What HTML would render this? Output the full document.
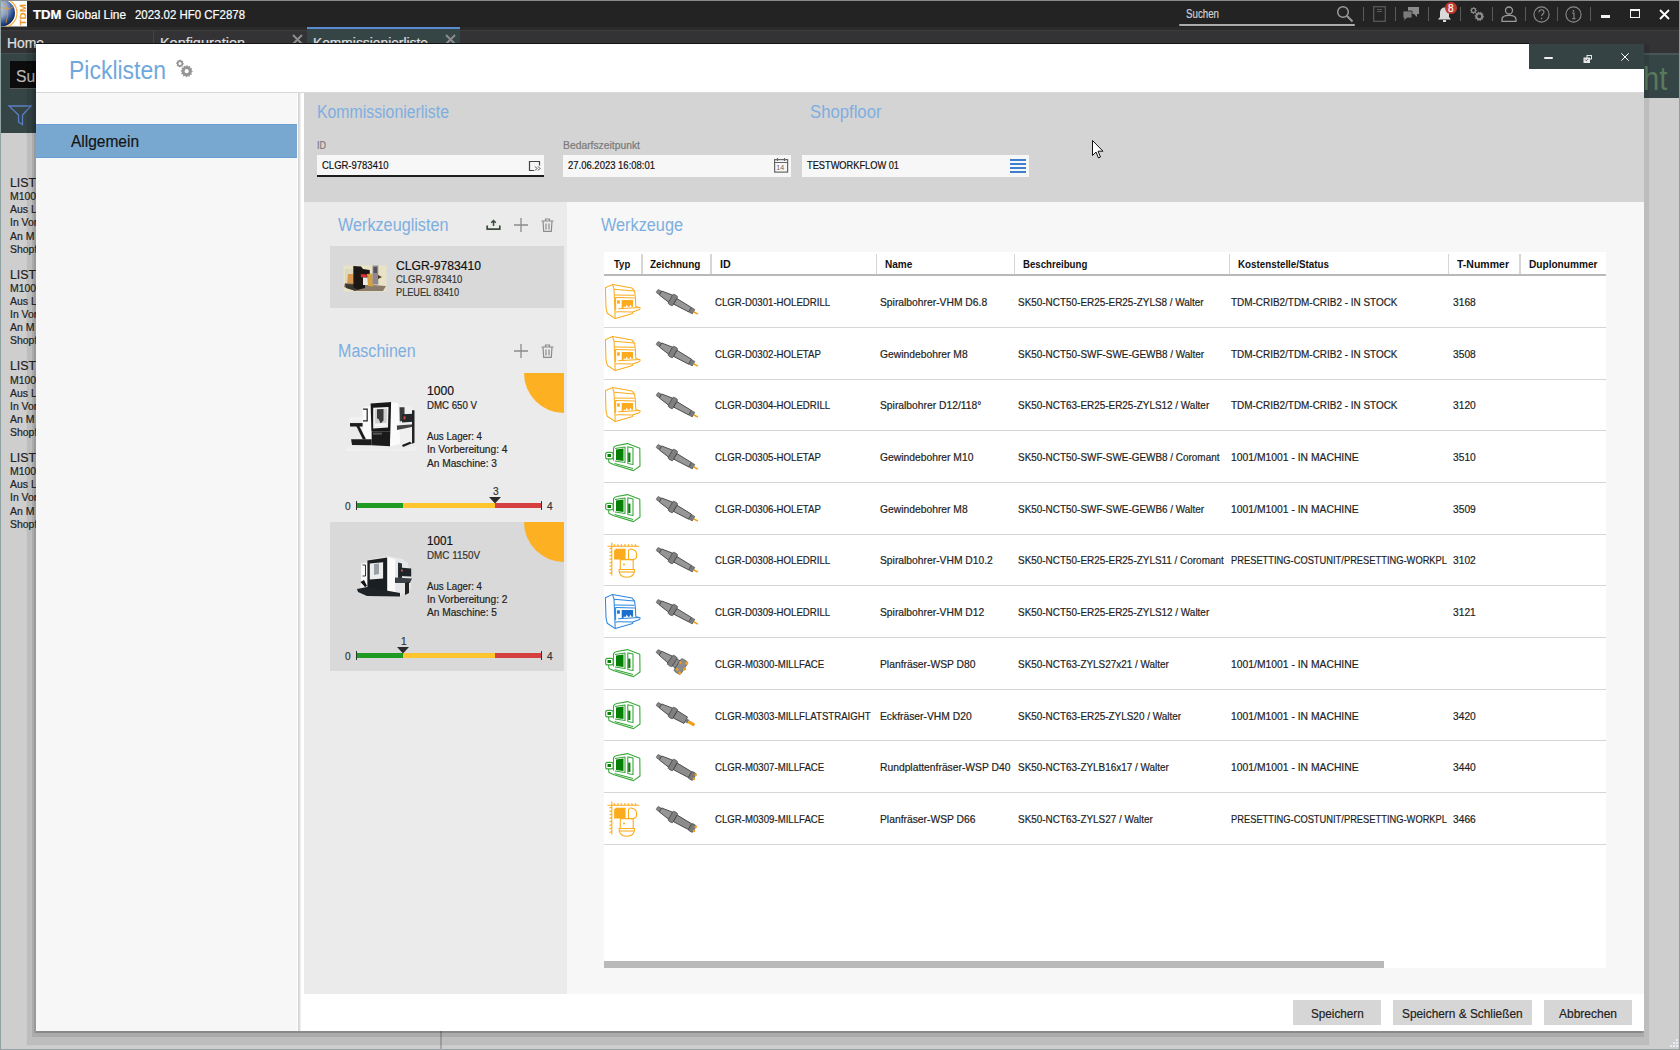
<!DOCTYPE html>
<html><head><meta charset="utf-8">
<style>
*{box-sizing:border-box;margin:0;padding:0}
html,body{width:1680px;height:1050px;overflow:hidden;background:#cecece;font-family:"Liberation Sans",sans-serif;position:relative}
.a{position:absolute}
.t{position:absolute;white-space:nowrap;line-height:1;transform-origin:0 0;-webkit-text-stroke:0.2px currentColor}
svg{position:absolute;overflow:visible}
</style></head><body>

<div class="a" style="left:0px;top:0px;width:1680px;height:1050px;background:#cecece;"></div>
<div class="a" style="left:0px;top:0px;width:1680px;height:27px;background:#232323;"></div>
<div class="a" style="left:0px;top:0px;width:1680px;height:1px;background:#8a8a8a;"></div>
<svg style="left:1px;top:1px" width="26" height="26" viewBox="0 0 26 26"><defs><radialGradient id="gl" cx="0.35" cy="0.3" r="0.8"><stop offset="0" stop-color="#c8d0e0"/><stop offset="0.45" stop-color="#8fa3c8"/><stop offset="0.75" stop-color="#2a4c8c"/><stop offset="1" stop-color="#0a1a40"/></radialGradient><clipPath id="lc"><rect width="26" height="25.5"/></clipPath></defs><rect width="26" height="25.5" fill="#fdfdfd"/><g clip-path="url(#lc)"><circle cx="1.5" cy="12" r="14.5" fill="none" stroke="#f5b040" stroke-width="1.2"/><circle cx="0.5" cy="12" r="13.5" fill="url(#gl)"/><path d="M2 1Q9 8 5 22M-1 6Q8 10 13 5" fill="none" stroke="#e8a030" stroke-width="0.9" opacity="0.8"/></g><text x="0" y="0" transform="translate(24.5 24.5) rotate(-90)" font-family="Liberation Sans" font-weight="bold" font-size="9.5" fill="#ec9522" textLength="21.5" lengthAdjust="spacingAndGlyphs">TDM</text></svg>
<div class="t" style="left:33px;top:9.44px;font-size:12px;color:#fff;font-weight:700;transform:scaleX(1.0962);">TDM</div>
<div class="t" style="left:66px;top:9.44px;font-size:12px;color:#fff;font-weight:400;transform:scaleX(0.9882);">Global Line</div>
<div class="t" style="left:135.3px;top:9.44px;font-size:12px;color:#fff;font-weight:400;transform:scaleX(0.9532);">2023.02 HF0 CF2878</div>
<div class="t" style="left:1186px;top:7.84px;font-size:12px;color:#d0d0d0;font-weight:400;transform:scaleX(0.8107);">Suchen</div>
<div class="a" style="left:1179px;top:24px;width:176px;height:2px;background:#acacac;border-radius:1px"></div>
<svg style="left:1336px;top:5px" width="18" height="18" viewBox="0 0 18 18"><circle cx="7" cy="7" r="5.3" fill="none" stroke="#9a9a9a" stroke-width="1.5"/><line x1="11" y1="11" x2="16.5" y2="16.5" stroke="#9a9a9a" stroke-width="2"/></svg>
<div class="a" style="left:1363px;top:7px;width:1px;height:14px;background:#5a5a5a;"></div>
<div class="a" style="left:1395px;top:7px;width:1px;height:14px;background:#5a5a5a;"></div>
<div class="a" style="left:1428px;top:7px;width:1px;height:14px;background:#5a5a5a;"></div>
<div class="a" style="left:1460px;top:7px;width:1px;height:14px;background:#5a5a5a;"></div>
<div class="a" style="left:1492px;top:7px;width:1px;height:14px;background:#5a5a5a;"></div>
<div class="a" style="left:1525px;top:7px;width:1px;height:14px;background:#5a5a5a;"></div>
<div class="a" style="left:1557px;top:7px;width:1px;height:14px;background:#5a5a5a;"></div>
<div class="a" style="left:1590px;top:7px;width:1px;height:14px;background:#5a5a5a;"></div>
<svg style="left:1373px;top:6px" width="13" height="16" viewBox="0 0 13 16"><rect x="0.7" y="0.7" width="11.6" height="14.6" fill="none" stroke="#5c5c5c" stroke-width="1.2"/><line x1="4" y1="3.5" x2="9" y2="3.5" stroke="#5c5c5c"/><line x1="4" y1="5.5" x2="9" y2="5.5" stroke="#5c5c5c"/></svg>
<svg style="left:1403px;top:7px" width="16" height="14" viewBox="0 0 16 14"><path d="M5 0h11v7h-2v3l-3-3H5z" fill="#8c8c8c"/><path d="M0 4h9v7H4l-3 3v-3H0z" fill="#7a7a7a" stroke="#232323" stroke-width="0.8"/></svg>
<svg style="left:1437px;top:6px" width="15" height="17" viewBox="0 0 15 17"><path d="M7.5 1.5c-3 0-4.5 2.5-4.5 5.5v4l-2 2.5h13l-2-2.5v-4c0-3-1.5-5.5-4.5-5.5z" fill="#d9d9d9"/><rect x="6" y="14" width="3" height="2" fill="#d9d9d9"/></svg>
<div class="a" style="left:1445px;top:2px;width:12px;height:12px;border-radius:50%;background:#c0392b"></div>
<div class="t" style="left:1448px;top:3.54px;font-size:10px;color:#fff;font-weight:400;">8</div>
<svg style="left:1469px;top:6px" width="16" height="16" viewBox="0 0 16 16"><path fill-rule="evenodd" fill="#8a8a8a" d="M7.90 4.50L7.83 5.16L6.99 5.53L6.74 6.00L6.90 6.90L6.39 7.33L5.53 6.99L5.03 7.15L4.50 7.90L3.84 7.83L3.47 6.99L3.00 6.74L2.10 6.90L1.67 6.39L2.01 5.53L1.85 5.03L1.10 4.50L1.17 3.84L2.01 3.47L2.26 3.00L2.10 2.10L2.61 1.67L3.47 2.01L3.97 1.85L4.50 1.10L5.16 1.17L5.53 2.01L6.00 2.26L6.90 2.10L7.33 2.61L6.99 3.47L7.15 3.97ZM5.90 4.50A1.4 1.4 0 1 0 3.10 4.50A1.4 1.4 0 1 0 5.90 4.50ZM15.00 10.30L14.94 11.04L14.01 11.51L13.77 12.07L14.10 13.06L13.62 13.62L12.59 13.46L12.07 13.77L11.75 14.77L11.04 14.94L10.30 14.20L9.69 14.15L8.85 14.77L8.17 14.49L8.01 13.46L7.54 13.06L6.50 13.06L6.11 12.43L6.59 11.51L6.45 10.91L5.60 10.30L5.66 9.56L6.59 9.09L6.83 8.53L6.50 7.54L6.98 6.98L8.01 7.14L8.53 6.83L8.85 5.83L9.56 5.66L10.30 6.40L10.91 6.45L11.75 5.83L12.43 6.11L12.59 7.14L13.06 7.54L14.10 7.54L14.49 8.17L14.01 9.09L14.15 9.69ZM12.20 10.30A1.9 1.9 0 1 0 8.40 10.30A1.9 1.9 0 1 0 12.20 10.30Z"/></svg>
<svg style="left:1501px;top:6px" width="16" height="16" viewBox="0 0 16 16"><circle cx="8" cy="4.5" r="3.5" fill="none" stroke="#9a9a9a" stroke-width="1.3"/><path d="M1 15.3v-2c0-2.5 2.5-4 7-4s7 1.5 7 4v2z" fill="none" stroke="#9a9a9a" stroke-width="1.3"/></svg>
<svg style="left:1533px;top:6px" width="17" height="17" viewBox="0 0 17 17"><circle cx="8.5" cy="8.5" r="7.6" fill="none" stroke="#8a8a8a" stroke-width="1.1"/><path d="M6 6.3c0-1.5 1.2-2.5 2.5-2.5s2.5 1 2.5 2.3c0 1.8-2.4 2-2.4 4" fill="none" stroke="#8a8a8a" stroke-width="1.1"/><circle cx="8.6" cy="12.6" r="0.8" fill="#8a8a8a"/></svg>
<svg style="left:1565px;top:6px" width="17" height="17" viewBox="0 0 17 17"><circle cx="8.5" cy="8.5" r="7.6" fill="none" stroke="#8a8a8a" stroke-width="1.1"/><circle cx="8.5" cy="4.8" r="0.9" fill="#8a8a8a"/><path d="M7 7h2v5.5M7 12.8h3.5" fill="none" stroke="#8a8a8a" stroke-width="1.1"/></svg>
<div class="a" style="left:1601px;top:15px;width:9px;height:3px;background:#f4f4f4;"></div>
<div class="a" style="left:1630px;top:9px;width:10px;height:9px;border:1.2px solid #f4f4f4;border-top-width:2.6px"></div>
<svg style="left:1659px;top:9px" width="11" height="11" viewBox="0 0 11 11"><path d="M1 1L10 10M10 1L1 10" stroke="#fff" stroke-width="1.8"/></svg>
<div class="a" style="left:0px;top:27px;width:1680px;height:27px;background:#333336;"></div>
<div class="a" style="left:0px;top:27px;width:1680px;height:3px;background:#2a2a2a;"></div>
<div class="a" style="left:0px;top:30px;width:1680px;height:1px;background:#3d3d3f;"></div>
<div class="a" style="left:153px;top:31px;width:1px;height:14px;background:#444;"></div>
<div class="a" style="left:307px;top:27px;width:153px;height:20px;background:#354445;"></div>
<div class="a" style="left:307px;top:27px;width:153px;height:2px;background:#5b8bd0;"></div>
<div class="t" style="left:7px;top:35.30px;font-size:15px;color:#e0e0e0;font-weight:400;transform:scaleX(0.9246);">Home</div>
<div class="t" style="left:160px;top:35.30px;font-size:15px;color:#e0e0e0;font-weight:400;transform:scaleX(0.9615);">Konfiguration</div>
<div class="t" style="left:313px;top:35.30px;font-size:15px;color:#e0e0e0;font-weight:400;transform:scaleX(0.9197);">Kommissionierliste</div>
<svg style="left:292px;top:34px" width="11" height="10" viewBox="0 0 11 10"><path d="M1 1L10 10M10 1L1 10" stroke="#8c8c8c" stroke-width="2"/></svg>
<svg style="left:445px;top:34px" width="11" height="10" viewBox="0 0 11 10"><path d="M1 1L10 10M10 1L1 10" stroke="#8c8c8c" stroke-width="2"/></svg>
<div class="a" style="left:1px;top:53px;width:35px;height:80px;background:#354445;"></div>
<div class="a" style="left:1px;top:53px;width:35px;height:1px;background:#454f50;"></div>
<div class="a" style="left:10px;top:61px;width:26px;height:28px;background:#0c0c0c;"></div>
<div class="a" style="left:10px;top:88px;width:26px;height:1px;background:#5a5a5a;"></div>
<div class="t" style="left:16px;top:67.61px;font-size:17px;color:#b9b9b9;font-weight:400;transform:scaleX(0.9200);">Su</div>
<svg style="left:8px;top:105px" width="24" height="21" viewBox="0 0 24 21"><path d="M1 1h22l-8.5 9v9.5l-4-2.5v-7z" fill="none" stroke="#5b7fc4" stroke-width="1.3"/></svg>
<div class="a" style="left:0px;top:0px;width:1px;height:1050px;background:#8fa3a3;"></div>
<div class="a" style="left:0px;top:1049px;width:1680px;height:1px;background:#8fa3a3;"></div>
<div class="a" style="left:1679px;top:0px;width:1px;height:1050px;background:#9a9a9a;"></div>
<div class="t" style="left:10px;top:176.00px;font-size:13px;color:#222;font-weight:400;transform:scaleX(0.9500);">LISTI</div>
<div class="t" style="left:10px;top:191.39px;font-size:11px;color:#222;font-weight:400;transform:scaleX(0.9500);">M100</div>
<div class="t" style="left:10px;top:204.29px;font-size:11px;color:#222;font-weight:400;transform:scaleX(0.9500);">Aus L</div>
<div class="t" style="left:10px;top:217.39px;font-size:11px;color:#222;font-weight:400;transform:scaleX(0.9500);">In Vor</div>
<div class="t" style="left:10px;top:230.69px;font-size:11px;color:#222;font-weight:400;transform:scaleX(0.9500);">An M</div>
<div class="t" style="left:10px;top:243.59px;font-size:11px;color:#222;font-weight:400;transform:scaleX(0.9500);">Shopf</div>
<div class="t" style="left:10px;top:267.70px;font-size:13px;color:#222;font-weight:400;transform:scaleX(0.9500);">LISTI</div>
<div class="t" style="left:10px;top:283.09px;font-size:11px;color:#222;font-weight:400;transform:scaleX(0.9500);">M100</div>
<div class="t" style="left:10px;top:295.99px;font-size:11px;color:#222;font-weight:400;transform:scaleX(0.9500);">Aus L</div>
<div class="t" style="left:10px;top:309.09px;font-size:11px;color:#222;font-weight:400;transform:scaleX(0.9500);">In Vor</div>
<div class="t" style="left:10px;top:322.39px;font-size:11px;color:#222;font-weight:400;transform:scaleX(0.9500);">An M</div>
<div class="t" style="left:10px;top:335.29px;font-size:11px;color:#222;font-weight:400;transform:scaleX(0.9500);">Shopf</div>
<div class="t" style="left:10px;top:359.40px;font-size:13px;color:#222;font-weight:400;transform:scaleX(0.9500);">LISTI</div>
<div class="t" style="left:10px;top:374.79px;font-size:11px;color:#222;font-weight:400;transform:scaleX(0.9500);">M100</div>
<div class="t" style="left:10px;top:387.69px;font-size:11px;color:#222;font-weight:400;transform:scaleX(0.9500);">Aus L</div>
<div class="t" style="left:10px;top:400.79px;font-size:11px;color:#222;font-weight:400;transform:scaleX(0.9500);">In Vor</div>
<div class="t" style="left:10px;top:414.09px;font-size:11px;color:#222;font-weight:400;transform:scaleX(0.9500);">An M</div>
<div class="t" style="left:10px;top:426.99px;font-size:11px;color:#222;font-weight:400;transform:scaleX(0.9500);">Shopf</div>
<div class="t" style="left:10px;top:451.10px;font-size:13px;color:#222;font-weight:400;transform:scaleX(0.9500);">LISTI</div>
<div class="t" style="left:10px;top:466.49px;font-size:11px;color:#222;font-weight:400;transform:scaleX(0.9500);">M100</div>
<div class="t" style="left:10px;top:479.39px;font-size:11px;color:#222;font-weight:400;transform:scaleX(0.9500);">Aus L</div>
<div class="t" style="left:10px;top:492.49px;font-size:11px;color:#222;font-weight:400;transform:scaleX(0.9500);">In Vor</div>
<div class="t" style="left:10px;top:505.79px;font-size:11px;color:#222;font-weight:400;transform:scaleX(0.9500);">An M</div>
<div class="t" style="left:10px;top:518.69px;font-size:11px;color:#222;font-weight:400;transform:scaleX(0.9500);">Shopf</div>
<div class="a" style="left:1644px;top:53px;width:35px;height:45px;background:#354445;"></div>
<div class="a" style="left:1644px;top:53px;width:35px;height:2px;background:#4a5556;"></div>
<div class="t" style="left:1643px;top:61.22px;font-size:34px;color:#587a5c;font-weight:400;transform:scaleX(0.8600);-webkit-text-stroke:0">ht</div>
<div class="a" style="left:440px;top:1031px;width:2px;height:19px;background:#a8a8a8;"></div>
<div class="a" style="left:36px;top:43px;width:1493px;height:1px;background:#141414;"></div>
<div class="a" style="left:36px;top:44px;width:1608px;height:987px;background:#fff;box-shadow:0 2px 0 0 rgba(0,0,0,.11),-2px 2px 0 0 rgba(0,0,0,.094),-2px 4px 0 2px rgba(0,0,0,.095),-2px 7px 1px 7px rgba(0,0,0,.083)"></div>
<div class="a" style="left:36px;top:92px;width:1608px;height:1px;background:#d9d9d9;"></div>
<div class="t" style="left:68.5px;top:56.99px;font-size:26px;color:#6fa8dc;font-weight:400;transform:scaleX(0.8832);-webkit-text-stroke:0">Picklisten</div>
<svg style="left:170px;top:55px" width="30" height="27" viewBox="0 0 30 27"><path fill-rule="evenodd" fill="#959595" d="M13.90 8.50L13.83 9.26L12.96 9.72L12.66 10.28L12.76 11.26L12.17 11.74L11.22 11.46L10.62 11.64L10.00 12.40L9.24 12.33L8.78 11.46L8.22 11.16L7.24 11.26L6.76 10.67L7.04 9.72L6.86 9.12L6.10 8.50L6.17 7.74L7.04 7.28L7.34 6.72L7.24 5.74L7.83 5.26L8.78 5.54L9.38 5.36L10.00 4.60L10.76 4.67L11.22 5.54L11.78 5.84L12.76 5.74L13.24 6.33L12.96 7.28L13.14 7.88ZM11.50 8.50A1.5 1.5 0 1 0 8.50 8.50A1.5 1.5 0 1 0 11.50 8.50ZM22.70 16.20L22.65 16.98L21.53 17.49L21.32 18.11L21.90 19.20L21.46 19.85L20.24 19.74L19.74 20.17L19.70 21.40L19.00 21.74L17.99 21.03L17.35 21.16L16.70 22.20L15.92 22.15L15.41 21.03L14.79 20.82L13.70 21.40L13.05 20.96L13.16 19.74L12.73 19.24L11.50 19.20L11.16 18.50L11.87 17.49L11.74 16.85L10.70 16.20L10.75 15.42L11.87 14.91L12.08 14.29L11.50 13.20L11.94 12.55L13.16 12.66L13.66 12.23L13.70 11.00L14.40 10.66L15.41 11.37L16.05 11.24L16.70 10.20L17.48 10.25L17.99 11.37L18.61 11.58L19.70 11.00L20.35 11.44L20.24 12.66L20.67 13.16L21.90 13.20L22.24 13.90L21.53 14.91L21.66 15.55ZM18.80 16.20A2.1 2.1 0 1 0 14.60 16.20A2.1 2.1 0 1 0 18.80 16.20Z"/></svg>
<div class="a" style="left:1529px;top:44px;width:115px;height:25px;background:#354345;"></div>
<div class="a" style="left:1544px;top:57px;width:9px;height:2px;background:#f0f0f0;border-radius:1px"></div>
<svg style="left:1583px;top:55px" width="9" height="8" viewBox="0 0 9 8"><rect x="0.5" y="2.5" width="6.5" height="5.5" fill="#e6e6e6"/><rect x="4" y="0.5" width="4.5" height="3.5" fill="none" stroke="#e6e6e6" stroke-width="1"/><path d="M2 4.5l1.3 1.3 1.8-1.8" stroke="#354345" stroke-width="0.8" fill="none"/></svg>
<svg style="left:1621px;top:52.5px" width="8" height="8" viewBox="0 0 8 8"><path d="M.3 .3L7.7 7.7M7.7 .3L.3 7.7" stroke="#fff" stroke-width="1"/></svg>
<div class="a" style="left:36px;top:93px;width:262px;height:938px;background:#f7f7f7;"></div>
<div class="a" style="left:36px;top:124px;width:262px;height:34px;background:#78a8cf;border-top:1px solid #6a9dd0;border-bottom:1px solid #6a9dd0;border-right:1px solid #6a9dd0"></div>
<div class="t" style="left:71px;top:134.46px;font-size:16px;color:#141414;font-weight:400;transform:scaleX(0.9678);">Allgemein</div>
<div class="a" style="left:297px;top:93px;width:8px;height:938px;background:#fff;"></div>
<div class="a" style="left:298px;top:93px;width:1px;height:938px;background:#d3d3d3;"></div>
<div class="a" style="left:299px;top:93px;width:1px;height:938px;background:#dedede;"></div>
<div class="a" style="left:300px;top:93px;width:1px;height:938px;background:#efefef;"></div>
<div class="a" style="left:304px;top:93px;width:1340px;height:109px;background:#d4d4d4;"></div>
<div class="t" style="left:317px;top:103.36px;font-size:18px;color:#7eaee0;font-weight:400;transform:scaleX(0.8797);-webkit-text-stroke:0">Kommissionierliste</div>
<div class="t" style="left:809.5px;top:103.36px;font-size:18px;color:#7eaee0;font-weight:400;transform:scaleX(0.9278);-webkit-text-stroke:0">Shopfloor</div>
<div class="t" style="left:317px;top:141.23px;font-size:10px;color:#7a7a7a;font-weight:400;transform:scaleX(0.9000);">ID</div>
<div class="t" style="left:563.3px;top:141.23px;font-size:10px;color:#7a7a7a;font-weight:400;transform:scaleX(1.0336);">Bedarfszeitpunkt</div>
<div class="a" style="left:317px;top:155px;width:227px;height:22px;background:#f7f7f7;border-bottom:2px solid #1e1e1e"></div>
<div class="t" style="left:322px;top:159.99px;font-size:11px;color:#111;font-weight:400;transform:scaleX(0.8629);">CLGR-9783410</div>
<svg style="left:528px;top:160px" width="14" height="12" viewBox="0 0 14 12"><path d="M6 10.5H1.5v-9h10v4" fill="none" stroke="#444" stroke-width="1.2"/><path d="M7 6.5l2 2-2 2M10 6.5l2 2-2 2" fill="none" stroke="#444" stroke-width="1"/></svg>
<div class="a" style="left:563px;top:155px;width:228px;height:22px;background:#f7f7f7;"></div>
<div class="t" style="left:568px;top:159.99px;font-size:11px;color:#111;font-weight:400;transform:scaleX(0.8619);">27.06.2023 16:08:01</div>
<svg style="left:773px;top:157px" width="16" height="16" viewBox="0 0 16 16"><rect x="1.6" y="2.6" width="13" height="12.5" fill="none" stroke="#666" stroke-width="1.2"/><line x1="1.6" y1="5.5" x2="14.6" y2="5.5" stroke="#666" stroke-width="1"/><line x1="4.5" y1="1" x2="4.5" y2="4" stroke="#666" stroke-width="1.2"/><line x1="11.5" y1="1" x2="11.5" y2="4" stroke="#666" stroke-width="1.2"/><text x="3.3" y="13.4" font-size="7" font-family="Liberation Sans" fill="#666">14</text></svg>
<div class="a" style="left:802px;top:155px;width:227px;height:22px;background:#f7f7f7;"></div>
<div class="t" style="left:807px;top:159.99px;font-size:11px;color:#111;font-weight:400;transform:scaleX(0.8409);">TESTWORKFLOW 01</div>
<div class="a" style="left:1010px;top:159px;width:16px;height:1.5px;background:#3f7fcf;"></div>
<div class="a" style="left:1010px;top:163px;width:16px;height:1.5px;background:#3f7fcf;"></div>
<div class="a" style="left:1010px;top:167px;width:16px;height:1.5px;background:#3f7fcf;"></div>
<div class="a" style="left:1010px;top:171px;width:16px;height:1.5px;background:#3f7fcf;"></div>
<svg style="left:1092px;top:140px" width="12" height="19" viewBox="0 0 12 19"><path d="M.5 .5v15l3.5-3.5 2.5 6 2-1-2.5-5.8h5z" fill="#fff" stroke="#111" stroke-width="1"/></svg>
<div class="a" style="left:304px;top:202px;width:263px;height:792px;background:#ebebeb;"></div>
<div class="t" style="left:338px;top:215.76px;font-size:18px;color:#7eaee0;font-weight:400;transform:scaleX(0.9003);-webkit-text-stroke:0">Werkzeuglisten</div>
<svg style="left:486px;top:218px" width="15" height="13" viewBox="0 0 15 13"><path d="M1.2 7.5v3.6h12.6v-3.6" fill="none" stroke="#3b4a3b" stroke-width="1.7"/><path d="M7.5 2.5v5.5M5.2 4.8L7.5 2.5l2.3 2.3" fill="none" stroke="#3b4a3b" stroke-width="1.5"/></svg>
<svg style="left:514px;top:218px" width="14" height="14" viewBox="0 0 14 14"><path d="M7 0v14M0 7h14" stroke="#8c8c8c" stroke-width="1.3"/></svg>
<svg style="left:541px;top:218px" width="13" height="14" viewBox="0 0 13 14"><path d="M0.5 3h12M4.5 3V1h4v2M2 3l.7 10.3h7.6L11 3M5 5.5v6M8 5.5v6" fill="none" stroke="#8c8c8c" stroke-width="1.2"/></svg>
<div class="a" style="left:330px;top:246px;width:234px;height:62px;background:#d9d9d9;"></div>
<svg style="left:343px;top:264.5px" width="44" height="27" viewBox="0 0 44 27"><rect x="0.5" y="0.5" width="43" height="26" rx="1" fill="#e9e3c6"/><rect x="2" y="4" width="8" height="14" fill="#ddd8c0"/><path d="M5 9L10.3 9L10.3 20L4 20z" fill="#d99850"/><path d="M2 18L43 21L40 26L12 26L1 22z" fill="#8a7a6a"/><path d="M2 19L12 19.5L13 26L3 23z" fill="#3a3630"/><path d="M10.3 1L18 1.5L20 4L26.7 5L27 15L22 17L22 23L14 25L10.3 22z" fill="#1a1714"/><path d="M17.8 9.1L24 9.5L23.5 12L18 12.5z" fill="#e03030"/><path d="M20 12.5L25 12.5L25 20L20 20z" fill="#ecebe6"/><path d="M24 9L29.5 8.6L30 21.6L25 21z" fill="#d4a040"/><path d="M29.5 0.5L35.3 0.5L35.3 19.5L29.5 19.5z" fill="#8f8790"/><path d="M30.5 2L34 2L34 8L30.5 8z" fill="#55505a"/><path d="M35 10L39 12L35 14z" fill="#4a3a2a"/></svg>
<div class="t" style="left:395.5px;top:258.50px;font-size:13px;color:#111;font-weight:400;transform:scaleX(0.9334);">CLGR-9783410</div>
<div class="t" style="left:396px;top:273.89px;font-size:11px;color:#333;font-weight:400;transform:scaleX(0.8603);">CLGR-9783410</div>
<div class="t" style="left:396px;top:286.99px;font-size:11px;color:#333;font-weight:400;transform:scaleX(0.8351);">PLEUEL 83410</div>
<div class="t" style="left:338px;top:341.96px;font-size:18px;color:#7eaee0;font-weight:400;transform:scaleX(0.8926);-webkit-text-stroke:0">Maschinen</div>
<svg style="left:514px;top:344px" width="14" height="14" viewBox="0 0 14 14"><path d="M7 0v14M0 7h14" stroke="#8c8c8c" stroke-width="1.3"/></svg>
<svg style="left:541px;top:344px" width="13" height="14" viewBox="0 0 13 14"><path d="M0.5 3h12M4.5 3V1h4v2M2 3l.7 10.3h7.6L11 3M5 5.5v6M8 5.5v6" fill="none" stroke="#8c8c8c" stroke-width="1.2"/></svg>
<div class="a" style="left:523.5px;top:372.5px;width:40px;height:40px;background:#fdb022;border-bottom-left-radius:40px"></div>
<svg style="left:346px;top:400px" width="70" height="51" viewBox="0 0 70 50" preserveAspectRatio="none"><path d="M0 47 Q35 52 70 45 L70 50 L0 50Z" fill="#f4f4f4" opacity="0.6"/><path d="M3 17l14-0.5v3.5l-14 0.5z" fill="#f2f2f2"/><path d="M16.6 7l9-1.5v35l-9-1.5z" fill="#fafafa"/><path d="M17 9h4.2v11.5H17" fill="none" stroke="#222" stroke-width="1.2"/><path d="M24.6 3.4L45.7 2L45.2 30.6L25.4 30.6z" fill="#181818"/><path d="M27.2 7.5L42.5 6.8L42 27L27.2 28z" fill="#f0f0f0"/><path d="M29 9L41 8.5L40.5 25.5L29 26z" fill="#cfcfcf"/><path d="M31 9L37.5 8.8L37.5 20L34.5 23L33 19L31 18z" fill="#3a3a3a"/><path d="M29 23L40.5 22.5L40.5 25.5L29 26z" fill="#f5f5f5"/><path d="M25.7 30.6L45.1 30.6L44 45.4L25.7 44.3z" fill="#1a1a1a"/><path d="M27 32L36 32L36 34L27 34z" fill="#555"/><path d="M45.1 2L52.6 3.1L54.3 43.1L44 45.4z" fill="#fbfbfb"/><path d="M52.6 5.4L66.9 5.4L66.9 42.6L54.3 45.4z" fill="#efefef"/><path d="M53.5 7L58.5 7L58.5 20L53.8 21z" fill="#3a3a3a"/><path d="M56 14L67.4 13.5L67.4 21.4L56 22z" fill="#22272b"/><path d="M57.5 16l2 0 0 3-2 0z" fill="#c44"/><path d="M50.9 25L68 23.7L68 26L51 29.4z" fill="#444"/><path d="M66 10L68.5 10L68.5 42L66 43z" fill="#222"/><path d="M56 44L64 41L66 42.5L57 46z" fill="#1a1a1a"/><path d="M4 22.6L16.6 22.6L16.6 26L4 26z" fill="#1c1c1c"/><path d="M10 25L13 25L20 38.6L16.8 38.6z" fill="#1c1c1c"/><path d="M5.1 38.6L25.7 38.6L25.7 44.3L6 44z" fill="#1c1c1c"/></svg>
<div class="t" style="left:427px;top:384.40px;font-size:13px;color:#111;font-weight:400;transform:scaleX(0.9335);">1000</div>
<div class="t" style="left:427px;top:399.99px;font-size:11px;color:#222;font-weight:400;transform:scaleX(0.8794);">DMC 650 V</div>
<div class="t" style="left:427px;top:431.39px;font-size:11px;color:#222;font-weight:400;transform:scaleX(0.8818);">Aus Lager: 4</div>
<div class="t" style="left:427px;top:444.29px;font-size:11px;color:#222;font-weight:400;transform:scaleX(0.9270);">In Vorbereitung: 4</div>
<div class="t" style="left:427px;top:457.59px;font-size:11px;color:#222;font-weight:400;transform:scaleX(0.9231);">An Maschine: 3</div>
<div class="t" style="left:345px;top:500.69px;font-size:11px;color:#333;font-weight:400;transform:scaleX(0.9200);">0</div>
<div class="t" style="left:547px;top:500.69px;font-size:11px;color:#333;font-weight:400;transform:scaleX(0.9200);">4</div>
<div class="a" style="left:356.5px;top:503.0px;width:46.5px;height:4.5px;background:#1f9a22;"></div>
<div class="a" style="left:403px;top:503.0px;width:92px;height:4.5px;background:#fec52e;"></div>
<div class="a" style="left:495px;top:503.0px;width:46.5px;height:4.5px;background:#d63f3f;"></div>
<div class="a" style="left:356px;top:500.5px;width:1.2px;height:9px;background:#333;"></div>
<div class="a" style="left:540.5px;top:500.5px;width:1.2px;height:9px;background:#333;"></div>
<svg style="left:489px;top:497.0px" width="12" height="7" viewBox="0 0 12 7"><path d="M0 0h12L6 6.5z" fill="#2b2b2b"/></svg>
<div class="t" style="left:492.5px;top:485.69px;font-size:11px;color:#333;font-weight:400;transform:scaleX(0.9200);">3</div>
<div class="a" style="left:330px;top:522px;width:234px;height:149px;background:#d9d9d9;"></div>
<div class="a" style="left:523.5px;top:522px;width:40px;height:40px;background:#fdb022;border-bottom-left-radius:40px"></div>
<svg style="left:355px;top:556px" width="57" height="41" viewBox="0 0 57 41"><path d="M4 34L12 4L33 0L48 3L56 14L56 33L45 40L12 38Z" fill="#f6f6f6" opacity="0.5"/><path d="M6.2 7.5L12.4 6.5L12.4 31L6.2 30z" fill="#fafafa"/><path d="M7.5 9h3v11h-3" fill="none" stroke="#333" stroke-width="1"/><path d="M12.4 4.5L32.4 1.4L32.4 35.7L12.4 32z" fill="#1a1f22"/><path d="M14.8 7.6L28.1 6.3L28.1 22.5L14.8 23.5z" fill="#ececec"/><path d="M19 8L24 7.5L24 18L19 19z" fill="#9aa0a8"/><path d="M32.4 0.8L40.5 3.5L40.5 37.5L32.4 35.7z" fill="#fbfbfb"/><path d="M40.5 3.5L53 6L53 36L40.5 38z" fill="#e4e6e8"/><path d="M43 6.5L47 7.5L47 26L43 26z" fill="#2a3035"/><path d="M44.3 11.6L56.2 12.5L56.2 20.5L44.3 20z" fill="#1f2428"/><rect x="46" y="13.5" width="1.8" height="2" fill="#d05050"/><path d="M40 21.5L57 22.5L55 27L40 27z" fill="#3a4045"/><path d="M50 27L54 26L54 37L50 39z" fill="#222"/><path d="M5.5 26L9 24L12 30L10 31z" fill="#111"/><path d="M2 33L12 31L45 37L45 40.5L12 40L3 36z" fill="#1d2326"/></svg>
<div class="t" style="left:427px;top:534.20px;font-size:13px;color:#111;font-weight:400;transform:scaleX(0.8990);">1001</div>
<div class="t" style="left:427px;top:549.59px;font-size:11px;color:#333;font-weight:400;transform:scaleX(0.8966);">DMC 1150V</div>
<div class="t" style="left:427px;top:581.29px;font-size:11px;color:#222;font-weight:400;transform:scaleX(0.8818);">Aus Lager: 4</div>
<div class="t" style="left:427px;top:594.19px;font-size:11px;color:#222;font-weight:400;transform:scaleX(0.9270);">In Vorbereitung: 2</div>
<div class="t" style="left:427px;top:606.99px;font-size:11px;color:#222;font-weight:400;transform:scaleX(0.9231);">An Maschine: 5</div>
<div class="t" style="left:345px;top:650.69px;font-size:11px;color:#333;font-weight:400;transform:scaleX(0.9200);">0</div>
<div class="t" style="left:547px;top:650.69px;font-size:11px;color:#333;font-weight:400;transform:scaleX(0.9200);">4</div>
<div class="a" style="left:356.5px;top:653.0px;width:46.5px;height:4.5px;background:#1f9a22;"></div>
<div class="a" style="left:403px;top:653.0px;width:92px;height:4.5px;background:#fec52e;"></div>
<div class="a" style="left:495px;top:653.0px;width:46.5px;height:4.5px;background:#d63f3f;"></div>
<div class="a" style="left:356px;top:650.5px;width:1.2px;height:9px;background:#333;"></div>
<div class="a" style="left:540.5px;top:650.5px;width:1.2px;height:9px;background:#333;"></div>
<svg style="left:397px;top:647.0px" width="12" height="7" viewBox="0 0 12 7"><path d="M0 0h12L6 6.5z" fill="#2b2b2b"/></svg>
<div class="t" style="left:400.5px;top:635.69px;font-size:11px;color:#333;font-weight:400;transform:scaleX(0.9200);">1</div>
<div class="a" style="left:567px;top:202px;width:1077px;height:792px;background:#f7f7f7;"></div>
<div class="t" style="left:600.5px;top:215.76px;font-size:18px;color:#7eaee0;font-weight:400;transform:scaleX(0.9039);-webkit-text-stroke:0">Werkzeuge</div>
<div class="a" style="left:604px;top:252px;width:1002px;height:716px;background:#fff;"></div>
<div class="t" style="left:614px;top:258.69px;font-size:11px;color:#111;font-weight:700;transform:scaleX(0.8640);-webkit-text-stroke:0">Typ</div>
<div class="t" style="left:650px;top:258.69px;font-size:11px;color:#111;font-weight:700;transform:scaleX(0.9045);-webkit-text-stroke:0">Zeichnung</div>
<div class="t" style="left:719.5px;top:258.69px;font-size:11px;color:#111;font-weight:700;transform:scaleX(0.9727);-webkit-text-stroke:0">ID</div>
<div class="t" style="left:885px;top:258.69px;font-size:11px;color:#111;font-weight:700;transform:scaleX(0.9143);-webkit-text-stroke:0">Name</div>
<div class="t" style="left:1023px;top:258.69px;font-size:11px;color:#111;font-weight:700;transform:scaleX(0.8765);-webkit-text-stroke:0">Beschreibung</div>
<div class="t" style="left:1238px;top:258.69px;font-size:11px;color:#111;font-weight:700;transform:scaleX(0.8913);-webkit-text-stroke:0">Kostenstelle/Status</div>
<div class="t" style="left:1457px;top:258.69px;font-size:11px;color:#111;font-weight:700;transform:scaleX(0.9558);-webkit-text-stroke:0">T-Nummer</div>
<div class="t" style="left:1528.8px;top:258.69px;font-size:11px;color:#111;font-weight:700;transform:scaleX(0.9187);-webkit-text-stroke:0">Duplonummer</div>
<div class="a" style="left:641px;top:254px;width:1.5px;height:21px;background:#d6d6d6;"></div>
<div class="a" style="left:710px;top:254px;width:1.5px;height:21px;background:#d6d6d6;"></div>
<div class="a" style="left:875.5px;top:254px;width:1.5px;height:21px;background:#d6d6d6;"></div>
<div class="a" style="left:1013.5px;top:254px;width:1.5px;height:21px;background:#d6d6d6;"></div>
<div class="a" style="left:1228.8px;top:254px;width:1.5px;height:21px;background:#d6d6d6;"></div>
<div class="a" style="left:1447.6px;top:254px;width:1.5px;height:21px;background:#d6d6d6;"></div>
<div class="a" style="left:1519px;top:254px;width:1.5px;height:21px;background:#d6d6d6;"></div>
<div class="a" style="left:604px;top:274px;width:1002px;height:2px;background:#b9b9b9;"></div>
<svg style="left:605px;top:284.0px" width="37" height="36" viewBox="0 0 37 36"><g fill="none" stroke="#fbab1c" stroke-width="1.05" stroke-linejoin="round"><path d="M0.4 3.8L7.5 0.4L27 4.1L29.6 7.1L30.4 14L30.8 22.4L35.3 23.9L34.6 25.4L27.7 28.1L27.7 29.6L10.2 34.6L2.2 29.2L1 23.9Z"/><path d="M7.5 0.6L9 4.9L10.2 34.6"/><path d="M9 5.2L29.2 7.1"/><path d="M9.4 11L29.4 11.3"/><path d="M10.2 13.6L29.8 14"/><path d="M10.6 14V26"/><path d="M13.2 24.7L34.8 23.4"/><path d="M14 27.7L27.7 28.1"/><path d="M10.4 28.1L14 27.7"/></g><path d="M16.7 15.9L28.1 15.9L28.1 22.8L26.5 22.8L25.5 20.5L24.5 22.8L22.8 22.8L21.8 20.5L20.8 22.8L18.5 22.8L18.5 24L16.7 24Z" fill="#fbab1c"/><rect x="12.1" y="16.3" width="2.7" height="3.4" fill="#fbab1c"/></svg>
<svg style="left:652.5px;top:261.0px" width="60" height="60" viewBox="-4 -30 60 60"><g transform="rotate(29.5)"><rect x="0" y="-2" width="4.5" height="4" rx="1" fill="#858585" stroke="#3f3f3f" stroke-width="0.5"/><path d="M4 -2.3L16 -4.1L16 4.1L4 2.3Z" fill="#969696" stroke="#3f3f3f" stroke-width="0.8"/><rect x="15.5" y="-5.6" width="5.5" height="11.2" rx="1.5" fill="#7f7f7f" stroke="#3f3f3f" stroke-width="0.6"/><path d="M21 -3.2L38 -2.6L38 2.6L21 3.2Z" fill="#979797" stroke="#3f3f3f" stroke-width="0.8"/><rect x="38" y="-2.6" width="4" height="5.2" fill="#7c7c7c" stroke="#3f3f3f" stroke-width="0.5"/><path d="M42 0H47" stroke="#f0a018" stroke-width="1.6"/></g></svg>
<div class="t" style="left:715.2px;top:297.09px;font-size:11px;color:#1e1e1e;font-weight:400;transform:scaleX(0.8760);">CLGR-D0301-HOLEDRILL</div>
<div class="t" style="left:880px;top:297.09px;font-size:11px;color:#1e1e1e;font-weight:400;transform:scaleX(0.9370);">Spiralbohrer-VHM D6.8</div>
<div class="t" style="left:1018.3px;top:297.09px;font-size:11px;color:#1e1e1e;font-weight:400;transform:scaleX(0.9030);">SK50-NCT50-ER25-ER25-ZYLS8 / Walter</div>
<div class="t" style="left:1231px;top:297.09px;font-size:11px;color:#1e1e1e;font-weight:400;transform:scaleX(0.9031);">TDM-CRIB2/TDM-CRIB2 - IN STOCK</div>
<div class="t" style="left:1452.6px;top:297.09px;font-size:11px;color:#1e1e1e;font-weight:400;transform:scaleX(0.9300);">3168</div>
<div class="a" style="left:604px;top:327px;width:1002px;height:1px;background:#d6d6d6;"></div>
<svg style="left:605px;top:335.68px" width="37" height="36" viewBox="0 0 37 36"><g fill="none" stroke="#fbab1c" stroke-width="1.05" stroke-linejoin="round"><path d="M0.4 3.8L7.5 0.4L27 4.1L29.6 7.1L30.4 14L30.8 22.4L35.3 23.9L34.6 25.4L27.7 28.1L27.7 29.6L10.2 34.6L2.2 29.2L1 23.9Z"/><path d="M7.5 0.6L9 4.9L10.2 34.6"/><path d="M9 5.2L29.2 7.1"/><path d="M9.4 11L29.4 11.3"/><path d="M10.2 13.6L29.8 14"/><path d="M10.6 14V26"/><path d="M13.2 24.7L34.8 23.4"/><path d="M14 27.7L27.7 28.1"/><path d="M10.4 28.1L14 27.7"/></g><path d="M16.7 15.9L28.1 15.9L28.1 22.8L26.5 22.8L25.5 20.5L24.5 22.8L22.8 22.8L21.8 20.5L20.8 22.8L18.5 22.8L18.5 24L16.7 24Z" fill="#fbab1c"/><rect x="12.1" y="16.3" width="2.7" height="3.4" fill="#fbab1c"/></svg>
<svg style="left:652.5px;top:312.68px" width="60" height="60" viewBox="-4 -30 60 60"><g transform="rotate(29.5)"><rect x="0" y="-2" width="4.5" height="4" rx="1" fill="#858585" stroke="#3f3f3f" stroke-width="0.5"/><path d="M4 -2.3L16 -4.1L16 4.1L4 2.3Z" fill="#969696" stroke="#3f3f3f" stroke-width="0.8"/><rect x="15.5" y="-5.6" width="5.5" height="11.2" rx="1.5" fill="#7f7f7f" stroke="#3f3f3f" stroke-width="0.6"/><path d="M21 -3.5L38 -2.9L38 2.9L21 3.5Z" fill="#979797" stroke="#3f3f3f" stroke-width="0.8"/><rect x="38" y="-2.6" width="4" height="5.2" fill="#7c7c7c" stroke="#3f3f3f" stroke-width="0.5"/><path d="M42 0H47" stroke="#f0a018" stroke-width="1.6"/></g></svg>
<div class="t" style="left:715.2px;top:348.77px;font-size:11px;color:#1e1e1e;font-weight:400;transform:scaleX(0.8760);">CLGR-D0302-HOLETAP</div>
<div class="t" style="left:880px;top:348.77px;font-size:11px;color:#1e1e1e;font-weight:400;transform:scaleX(0.9370);">Gewindebohrer M8</div>
<div class="t" style="left:1018.3px;top:348.77px;font-size:11px;color:#1e1e1e;font-weight:400;transform:scaleX(0.9030);">SK50-NCT50-SWF-SWE-GEWB8 / Walter</div>
<div class="t" style="left:1231px;top:348.77px;font-size:11px;color:#1e1e1e;font-weight:400;transform:scaleX(0.9031);">TDM-CRIB2/TDM-CRIB2 - IN STOCK</div>
<div class="t" style="left:1452.6px;top:348.77px;font-size:11px;color:#1e1e1e;font-weight:400;transform:scaleX(0.9300);">3508</div>
<div class="a" style="left:604px;top:379px;width:1002px;height:1px;background:#d6d6d6;"></div>
<svg style="left:605px;top:387.36px" width="37" height="36" viewBox="0 0 37 36"><g fill="none" stroke="#fbab1c" stroke-width="1.05" stroke-linejoin="round"><path d="M0.4 3.8L7.5 0.4L27 4.1L29.6 7.1L30.4 14L30.8 22.4L35.3 23.9L34.6 25.4L27.7 28.1L27.7 29.6L10.2 34.6L2.2 29.2L1 23.9Z"/><path d="M7.5 0.6L9 4.9L10.2 34.6"/><path d="M9 5.2L29.2 7.1"/><path d="M9.4 11L29.4 11.3"/><path d="M10.2 13.6L29.8 14"/><path d="M10.6 14V26"/><path d="M13.2 24.7L34.8 23.4"/><path d="M14 27.7L27.7 28.1"/><path d="M10.4 28.1L14 27.7"/></g><path d="M16.7 15.9L28.1 15.9L28.1 22.8L26.5 22.8L25.5 20.5L24.5 22.8L22.8 22.8L21.8 20.5L20.8 22.8L18.5 22.8L18.5 24L16.7 24Z" fill="#fbab1c"/><rect x="12.1" y="16.3" width="2.7" height="3.4" fill="#fbab1c"/></svg>
<svg style="left:652.5px;top:364.36px" width="60" height="60" viewBox="-4 -30 60 60"><g transform="rotate(29.5)"><rect x="0" y="-2" width="4.5" height="4" rx="1" fill="#858585" stroke="#3f3f3f" stroke-width="0.5"/><path d="M4 -2.3L16 -4.1L16 4.1L4 2.3Z" fill="#969696" stroke="#3f3f3f" stroke-width="0.8"/><rect x="15.5" y="-5.6" width="5.5" height="11.2" rx="1.5" fill="#7f7f7f" stroke="#3f3f3f" stroke-width="0.6"/><path d="M21 -3.2L38 -2.6L38 2.6L21 3.2Z" fill="#979797" stroke="#3f3f3f" stroke-width="0.8"/><rect x="38" y="-2.6" width="4" height="5.2" fill="#7c7c7c" stroke="#3f3f3f" stroke-width="0.5"/><path d="M42 0H47" stroke="#f0a018" stroke-width="1.6"/></g></svg>
<div class="t" style="left:715.2px;top:400.45px;font-size:11px;color:#1e1e1e;font-weight:400;transform:scaleX(0.8760);">CLGR-D0304-HOLEDRILL</div>
<div class="t" style="left:880px;top:400.45px;font-size:11px;color:#1e1e1e;font-weight:400;transform:scaleX(0.9370);">Spiralbohrer D12/118°</div>
<div class="t" style="left:1018.3px;top:400.45px;font-size:11px;color:#1e1e1e;font-weight:400;transform:scaleX(0.9030);">SK50-NCT63-ER25-ER25-ZYLS12 / Walter</div>
<div class="t" style="left:1231px;top:400.45px;font-size:11px;color:#1e1e1e;font-weight:400;transform:scaleX(0.9031);">TDM-CRIB2/TDM-CRIB2 - IN STOCK</div>
<div class="t" style="left:1452.6px;top:400.45px;font-size:11px;color:#1e1e1e;font-weight:400;transform:scaleX(0.9300);">3120</div>
<div class="a" style="left:604px;top:430px;width:1002px;height:1px;background:#d6d6d6;"></div>
<svg style="left:605px;top:442.53999999999996px" width="37" height="29" viewBox="0 0 37 29"><g fill="none" stroke="#3aa83a" stroke-width="1.1" stroke-linejoin="round"><path d="M8.5 17.5L8.5 5Q9 3 12 2.5L22.5 0.6L34.8 5.2L35 23L28.5 27.6L9 21.8L4 19.5L3.5 16"/><rect x="0.6" y="9.4" width="7.6" height="6.5" rx="2"/><path d="M10 5.5L20 4L20 19.5L10 18"/><path d="M22.8 3.8L28 5L28 21.5L22.8 20.5Z"/><path d="M9.5 20.5L28 25.5"/></g><path d="M11 6.6L18.5 5.6L18.5 18L11 17Z" fill="#058005"/><rect x="23.2" y="9.6" width="2.2" height="9.4" fill="#058005"/><rect x="2.5" y="11" width="3.5" height="3" fill="#058005"/></svg>
<svg style="left:652.5px;top:416.03999999999996px" width="60" height="60" viewBox="-4 -30 60 60"><g transform="rotate(29.5)"><rect x="0" y="-2" width="4.5" height="4" rx="1" fill="#858585" stroke="#3f3f3f" stroke-width="0.5"/><path d="M4 -2.3L16 -4.1L16 4.1L4 2.3Z" fill="#969696" stroke="#3f3f3f" stroke-width="0.8"/><rect x="15.5" y="-5.6" width="5.5" height="11.2" rx="1.5" fill="#7f7f7f" stroke="#3f3f3f" stroke-width="0.6"/><path d="M21 -3.2L38 -2.6L38 2.6L21 3.2Z" fill="#979797" stroke="#3f3f3f" stroke-width="0.8"/><rect x="38" y="-2.6" width="4" height="5.2" fill="#7c7c7c" stroke="#3f3f3f" stroke-width="0.5"/><path d="M42 0H47" stroke="#f0a018" stroke-width="1.6"/></g></svg>
<div class="t" style="left:715.2px;top:452.13px;font-size:11px;color:#1e1e1e;font-weight:400;transform:scaleX(0.8760);">CLGR-D0305-HOLETAP</div>
<div class="t" style="left:880px;top:452.13px;font-size:11px;color:#1e1e1e;font-weight:400;transform:scaleX(0.9370);">Gewindebohrer M10</div>
<div class="t" style="left:1018.3px;top:452.13px;font-size:11px;color:#1e1e1e;font-weight:400;transform:scaleX(0.9030);">SK50-NCT50-SWF-SWE-GEWB8 / Coromant</div>
<div class="t" style="left:1231px;top:452.13px;font-size:11px;color:#1e1e1e;font-weight:400;transform:scaleX(0.9402);">1001/M1001 - IN MACHINE</div>
<div class="t" style="left:1452.6px;top:452.13px;font-size:11px;color:#1e1e1e;font-weight:400;transform:scaleX(0.9300);">3510</div>
<div class="a" style="left:604px;top:482px;width:1002px;height:1px;background:#d6d6d6;"></div>
<svg style="left:605px;top:494.22px" width="37" height="29" viewBox="0 0 37 29"><g fill="none" stroke="#3aa83a" stroke-width="1.1" stroke-linejoin="round"><path d="M8.5 17.5L8.5 5Q9 3 12 2.5L22.5 0.6L34.8 5.2L35 23L28.5 27.6L9 21.8L4 19.5L3.5 16"/><rect x="0.6" y="9.4" width="7.6" height="6.5" rx="2"/><path d="M10 5.5L20 4L20 19.5L10 18"/><path d="M22.8 3.8L28 5L28 21.5L22.8 20.5Z"/><path d="M9.5 20.5L28 25.5"/></g><path d="M11 6.6L18.5 5.6L18.5 18L11 17Z" fill="#058005"/><rect x="23.2" y="9.6" width="2.2" height="9.4" fill="#058005"/><rect x="2.5" y="11" width="3.5" height="3" fill="#058005"/></svg>
<svg style="left:652.5px;top:467.72px" width="60" height="60" viewBox="-4 -30 60 60"><g transform="rotate(29.5)"><rect x="0" y="-2" width="4.5" height="4" rx="1" fill="#858585" stroke="#3f3f3f" stroke-width="0.5"/><path d="M4 -2.3L16 -4.1L16 4.1L4 2.3Z" fill="#969696" stroke="#3f3f3f" stroke-width="0.8"/><rect x="15.5" y="-5.6" width="5.5" height="11.2" rx="1.5" fill="#7f7f7f" stroke="#3f3f3f" stroke-width="0.6"/><path d="M21 -3.5L38 -2.9L38 2.9L21 3.5Z" fill="#979797" stroke="#3f3f3f" stroke-width="0.8"/><rect x="38" y="-2.6" width="4" height="5.2" fill="#7c7c7c" stroke="#3f3f3f" stroke-width="0.5"/><path d="M42 0H47" stroke="#f0a018" stroke-width="1.6"/></g></svg>
<div class="t" style="left:715.2px;top:503.81px;font-size:11px;color:#1e1e1e;font-weight:400;transform:scaleX(0.8760);">CLGR-D0306-HOLETAP</div>
<div class="t" style="left:880px;top:503.81px;font-size:11px;color:#1e1e1e;font-weight:400;transform:scaleX(0.9370);">Gewindebohrer M8</div>
<div class="t" style="left:1018.3px;top:503.81px;font-size:11px;color:#1e1e1e;font-weight:400;transform:scaleX(0.9030);">SK50-NCT50-SWF-SWE-GEWB6 / Walter</div>
<div class="t" style="left:1231px;top:503.81px;font-size:11px;color:#1e1e1e;font-weight:400;transform:scaleX(0.9402);">1001/M1001 - IN MACHINE</div>
<div class="t" style="left:1452.6px;top:503.81px;font-size:11px;color:#1e1e1e;font-weight:400;transform:scaleX(0.9300);">3509</div>
<div class="a" style="left:604px;top:534px;width:1002px;height:1px;background:#d6d6d6;"></div>
<svg style="left:607px;top:542.4px" width="33" height="36" viewBox="0 0 33 36"><g fill="none" stroke="#fbab1c" stroke-width="1.1" stroke-linejoin="round"><path d="M4.8 0.5V33.5"/><path d="M0.5 4.3H32.3"/><path d="M2.5 7.0l2.3 -1"/><path d="M2.5 10.5l2.3 -1"/><path d="M2.5 14.0l2.3 -1"/><path d="M2.5 17.5l2.3 -1"/><path d="M2.5 21.0l2.3 -1"/><path d="M2.5 24.5l2.3 -1"/><path d="M2.5 28.0l2.3 -1"/><path d="M2.5 31.5l2.3 -1"/><path d="M7.0 2.2l1 2.1"/><path d="M10.5 2.2l1 2.1"/><path d="M14.0 2.2l1 2.1"/><path d="M17.5 2.2l1 2.1"/><path d="M21.0 2.2l1 2.1"/><path d="M24.5 2.2l1 2.1"/><path d="M28.0 2.2l1 2.1"/><path d="M21.5 17.5V8.5Q22 6.8 24 7L27 8Q29.5 9 29.5 11.5V15.5Q28 17.5 26 17.6Z"/><path d="M13.3 17.6H26.2V27"/><path d="M13.3 17.6V27"/><path d="M12 27.5H27.6Q27.6 35 19.8 35.2Q12 35 12 27.5Z"/><path d="M12.5 30H27"/></g><path d="M9 6.7H18.6V17.6H7.1V8.6Z" fill="#fbab1c"/><circle cx="17" cy="22.5" r="1" fill="#fbab1c"/></svg>
<svg style="left:652.5px;top:519.4px" width="60" height="60" viewBox="-4 -30 60 60"><g transform="rotate(29.5)"><rect x="0" y="-2" width="4.5" height="4" rx="1" fill="#858585" stroke="#3f3f3f" stroke-width="0.5"/><path d="M4 -2.3L16 -4.1L16 4.1L4 2.3Z" fill="#969696" stroke="#3f3f3f" stroke-width="0.8"/><rect x="15.5" y="-5.6" width="5.5" height="11.2" rx="1.5" fill="#7f7f7f" stroke="#3f3f3f" stroke-width="0.6"/><path d="M21 -3.2L38 -2.6L38 2.6L21 3.2Z" fill="#979797" stroke="#3f3f3f" stroke-width="0.8"/><rect x="38" y="-2.6" width="4" height="5.2" fill="#7c7c7c" stroke="#3f3f3f" stroke-width="0.5"/><path d="M42 0H47" stroke="#f0a018" stroke-width="1.6"/></g></svg>
<div class="t" style="left:715.2px;top:555.49px;font-size:11px;color:#1e1e1e;font-weight:400;transform:scaleX(0.8760);">CLGR-D0308-HOLEDRILL</div>
<div class="t" style="left:880px;top:555.49px;font-size:11px;color:#1e1e1e;font-weight:400;transform:scaleX(0.9370);">Spiralbohrer-VHM D10.2</div>
<div class="t" style="left:1018.3px;top:555.49px;font-size:11px;color:#1e1e1e;font-weight:400;transform:scaleX(0.9030);">SK50-NCT50-ER25-ER25-ZYLS11 / Coromant</div>
<div class="t" style="left:1231px;top:555.49px;font-size:11px;color:#1e1e1e;font-weight:400;transform:scaleX(0.8475);">PRESETTING-COSTUNIT/PRESETTING-WORKPL</div>
<div class="t" style="left:1452.6px;top:555.49px;font-size:11px;color:#1e1e1e;font-weight:400;transform:scaleX(0.9300);">3102</div>
<div class="a" style="left:604px;top:585px;width:1002px;height:1px;background:#d6d6d6;"></div>
<svg style="left:605px;top:594.0799999999999px" width="37" height="36" viewBox="0 0 37 36"><g fill="none" stroke="#2a86e0" stroke-width="1.05" stroke-linejoin="round"><path d="M0.4 3.8L7.5 0.4L27 4.1L29.6 7.1L30.4 14L30.8 22.4L35.3 23.9L34.6 25.4L27.7 28.1L27.7 29.6L10.2 34.6L2.2 29.2L1 23.9Z"/><path d="M7.5 0.6L9 4.9L10.2 34.6"/><path d="M9 5.2L29.2 7.1"/><path d="M9.4 11L29.4 11.3"/><path d="M10.2 13.6L29.8 14"/><path d="M10.6 14V26"/><path d="M13.2 24.7L34.8 23.4"/><path d="M14 27.7L27.7 28.1"/><path d="M10.4 28.1L14 27.7"/></g><path d="M16.7 15.9L28.1 15.9L28.1 22.8L26.5 22.8L25.5 20.5L24.5 22.8L22.8 22.8L21.8 20.5L20.8 22.8L18.5 22.8L18.5 24L16.7 24Z" fill="#1a6fcc"/><rect x="12.1" y="16.3" width="2.7" height="3.4" fill="#1a6fcc"/></svg>
<svg style="left:652.5px;top:571.0799999999999px" width="60" height="60" viewBox="-4 -30 60 60"><g transform="rotate(29.5)"><rect x="0" y="-2" width="4.5" height="4" rx="1" fill="#858585" stroke="#3f3f3f" stroke-width="0.5"/><path d="M4 -2.3L16 -4.1L16 4.1L4 2.3Z" fill="#969696" stroke="#3f3f3f" stroke-width="0.8"/><rect x="15.5" y="-5.6" width="5.5" height="11.2" rx="1.5" fill="#7f7f7f" stroke="#3f3f3f" stroke-width="0.6"/><path d="M21 -3.2L38 -2.6L38 2.6L21 3.2Z" fill="#979797" stroke="#3f3f3f" stroke-width="0.8"/><rect x="38" y="-2.6" width="4" height="5.2" fill="#7c7c7c" stroke="#3f3f3f" stroke-width="0.5"/><path d="M42 0H47" stroke="#f0a018" stroke-width="1.6"/></g></svg>
<div class="t" style="left:715.2px;top:607.17px;font-size:11px;color:#1e1e1e;font-weight:400;transform:scaleX(0.8760);">CLGR-D0309-HOLEDRILL</div>
<div class="t" style="left:880px;top:607.17px;font-size:11px;color:#1e1e1e;font-weight:400;transform:scaleX(0.9370);">Spiralbohrer-VHM D12</div>
<div class="t" style="left:1018.3px;top:607.17px;font-size:11px;color:#1e1e1e;font-weight:400;transform:scaleX(0.9030);">SK50-NCT50-ER25-ER25-ZYLS12 / Walter</div>
<div class="t" style="left:1452.6px;top:607.17px;font-size:11px;color:#1e1e1e;font-weight:400;transform:scaleX(0.9300);">3121</div>
<div class="a" style="left:604px;top:637px;width:1002px;height:1px;background:#d6d6d6;"></div>
<svg style="left:605px;top:649.26px" width="37" height="29" viewBox="0 0 37 29"><g fill="none" stroke="#3aa83a" stroke-width="1.1" stroke-linejoin="round"><path d="M8.5 17.5L8.5 5Q9 3 12 2.5L22.5 0.6L34.8 5.2L35 23L28.5 27.6L9 21.8L4 19.5L3.5 16"/><rect x="0.6" y="9.4" width="7.6" height="6.5" rx="2"/><path d="M10 5.5L20 4L20 19.5L10 18"/><path d="M22.8 3.8L28 5L28 21.5L22.8 20.5Z"/><path d="M9.5 20.5L28 25.5"/></g><path d="M11 6.6L18.5 5.6L18.5 18L11 17Z" fill="#058005"/><rect x="23.2" y="9.6" width="2.2" height="9.4" fill="#058005"/><rect x="2.5" y="11" width="3.5" height="3" fill="#058005"/></svg>
<svg style="left:652.5px;top:621.26px" width="60" height="60" viewBox="-4 -30 60 60"><g transform="rotate(33)"><rect x="0" y="-2" width="4.5" height="4" rx="1" fill="#858585" stroke="#3f3f3f" stroke-width="0.5"/><path d="M4 -2.3L16 -4.1L16 4.1L4 2.3Z" fill="#969696" stroke="#3f3f3f" stroke-width="0.8"/><rect x="15.5" y="-5.6" width="5.5" height="11.2" rx="1.5" fill="#7f7f7f" stroke="#3f3f3f" stroke-width="0.6"/><rect x="21" y="-4.3" width="4" height="8.6" fill="#8a8a8a" stroke="#3f3f3f" stroke-width="0.6"/><rect x="24.5" y="-7.5" width="8" height="15" rx="2" fill="#8c8c8c" stroke="#3f3f3f" stroke-width="0.6"/><circle cx="31.5" cy="-6" r="1.6" fill="#f0a020"/><circle cx="33" cy="0" r="1.5" fill="#f0a020"/><circle cx="31" cy="6" r="1.5" fill="#f0a020"/><circle cx="26" cy="-3" r="1.3" fill="#f0a020"/><circle cx="27" cy="4.5" r="1.3" fill="#f0a020"/></g></svg>
<div class="t" style="left:715.2px;top:658.85px;font-size:11px;color:#1e1e1e;font-weight:400;transform:scaleX(0.8760);">CLGR-M0300-MILLFACE</div>
<div class="t" style="left:880px;top:658.85px;font-size:11px;color:#1e1e1e;font-weight:400;transform:scaleX(0.9370);">Planfräser-WSP D80</div>
<div class="t" style="left:1018.3px;top:658.85px;font-size:11px;color:#1e1e1e;font-weight:400;transform:scaleX(0.9030);">SK50-NCT63-ZYLS27x21 / Walter</div>
<div class="t" style="left:1231px;top:658.85px;font-size:11px;color:#1e1e1e;font-weight:400;transform:scaleX(0.9402);">1001/M1001 - IN MACHINE</div>
<div class="a" style="left:604px;top:689px;width:1002px;height:1px;background:#d6d6d6;"></div>
<svg style="left:605px;top:700.94px" width="37" height="29" viewBox="0 0 37 29"><g fill="none" stroke="#3aa83a" stroke-width="1.1" stroke-linejoin="round"><path d="M8.5 17.5L8.5 5Q9 3 12 2.5L22.5 0.6L34.8 5.2L35 23L28.5 27.6L9 21.8L4 19.5L3.5 16"/><rect x="0.6" y="9.4" width="7.6" height="6.5" rx="2"/><path d="M10 5.5L20 4L20 19.5L10 18"/><path d="M22.8 3.8L28 5L28 21.5L22.8 20.5Z"/><path d="M9.5 20.5L28 25.5"/></g><path d="M11 6.6L18.5 5.6L18.5 18L11 17Z" fill="#058005"/><rect x="23.2" y="9.6" width="2.2" height="9.4" fill="#058005"/><rect x="2.5" y="11" width="3.5" height="3" fill="#058005"/></svg>
<svg style="left:652.5px;top:674.44px" width="60" height="60" viewBox="-4 -30 60 60"><g transform="rotate(29.5)"><rect x="0" y="-2" width="4.5" height="4" rx="1" fill="#858585" stroke="#3f3f3f" stroke-width="0.5"/><path d="M4 -2.3L16 -4.1L16 4.1L4 2.3Z" fill="#969696" stroke="#3f3f3f" stroke-width="0.8"/><rect x="15.5" y="-5.6" width="5.5" height="11.2" rx="1.5" fill="#7f7f7f" stroke="#3f3f3f" stroke-width="0.6"/><path d="M21 -4.2L33 -3.6L33 3.6L21 4.2Z" fill="#8c8c8c" stroke="#3f3f3f" stroke-width="0.8"/><rect x="33" y="-2" width="3" height="4" fill="#777"/><rect x="36" y="-1.6" width="7" height="3.2" fill="#f0a018"/></g></svg>
<div class="t" style="left:715.2px;top:710.53px;font-size:11px;color:#1e1e1e;font-weight:400;transform:scaleX(0.8760);">CLGR-M0303-MILLFLATSTRAIGHT</div>
<div class="t" style="left:880px;top:710.53px;font-size:11px;color:#1e1e1e;font-weight:400;transform:scaleX(0.9370);">Eckfräser-VHM D20</div>
<div class="t" style="left:1018.3px;top:710.53px;font-size:11px;color:#1e1e1e;font-weight:400;transform:scaleX(0.9030);">SK50-NCT63-ER25-ZYLS20 / Walter</div>
<div class="t" style="left:1231px;top:710.53px;font-size:11px;color:#1e1e1e;font-weight:400;transform:scaleX(0.9402);">1001/M1001 - IN MACHINE</div>
<div class="t" style="left:1452.6px;top:710.53px;font-size:11px;color:#1e1e1e;font-weight:400;transform:scaleX(0.9300);">3420</div>
<div class="a" style="left:604px;top:740px;width:1002px;height:1px;background:#d6d6d6;"></div>
<svg style="left:605px;top:752.62px" width="37" height="29" viewBox="0 0 37 29"><g fill="none" stroke="#3aa83a" stroke-width="1.1" stroke-linejoin="round"><path d="M8.5 17.5L8.5 5Q9 3 12 2.5L22.5 0.6L34.8 5.2L35 23L28.5 27.6L9 21.8L4 19.5L3.5 16"/><rect x="0.6" y="9.4" width="7.6" height="6.5" rx="2"/><path d="M10 5.5L20 4L20 19.5L10 18"/><path d="M22.8 3.8L28 5L28 21.5L22.8 20.5Z"/><path d="M9.5 20.5L28 25.5"/></g><path d="M11 6.6L18.5 5.6L18.5 18L11 17Z" fill="#058005"/><rect x="23.2" y="9.6" width="2.2" height="9.4" fill="#058005"/><rect x="2.5" y="11" width="3.5" height="3" fill="#058005"/></svg>
<svg style="left:652.5px;top:726.12px" width="60" height="60" viewBox="-4 -30 60 60"><g transform="rotate(29.5)"><rect x="0" y="-2" width="4.5" height="4" rx="1" fill="#858585" stroke="#3f3f3f" stroke-width="0.5"/><path d="M4 -2.3L16 -4.1L16 4.1L4 2.3Z" fill="#969696" stroke="#3f3f3f" stroke-width="0.8"/><rect x="15.5" y="-5.6" width="5.5" height="11.2" rx="1.5" fill="#7f7f7f" stroke="#3f3f3f" stroke-width="0.6"/><path d="M21 -3.8L38 -3.3L38 3.3L21 3.8Z" fill="#8c8c8c" stroke="#3f3f3f" stroke-width="0.8"/><rect x="38" y="-4" width="5" height="8" rx="1.2" fill="#7a7a7a" stroke="#3f3f3f" stroke-width="0.6"/><circle cx="43" cy="-2.6" r="1.3" fill="#f0a020"/><circle cx="43.5" cy="1.8" r="1.3" fill="#f0a020"/></g></svg>
<div class="t" style="left:715.2px;top:762.21px;font-size:11px;color:#1e1e1e;font-weight:400;transform:scaleX(0.8760);">CLGR-M0307-MILLFACE</div>
<div class="t" style="left:880px;top:762.21px;font-size:11px;color:#1e1e1e;font-weight:400;transform:scaleX(0.9370);">Rundplattenfräser-WSP D40</div>
<div class="t" style="left:1018.3px;top:762.21px;font-size:11px;color:#1e1e1e;font-weight:400;transform:scaleX(0.9030);">SK50-NCT63-ZYLB16x17 / Walter</div>
<div class="t" style="left:1231px;top:762.21px;font-size:11px;color:#1e1e1e;font-weight:400;transform:scaleX(0.9402);">1001/M1001 - IN MACHINE</div>
<div class="t" style="left:1452.6px;top:762.21px;font-size:11px;color:#1e1e1e;font-weight:400;transform:scaleX(0.9300);">3440</div>
<div class="a" style="left:604px;top:792px;width:1002px;height:1px;background:#d6d6d6;"></div>
<svg style="left:607px;top:800.8px" width="33" height="36" viewBox="0 0 33 36"><g fill="none" stroke="#fbab1c" stroke-width="1.1" stroke-linejoin="round"><path d="M4.8 0.5V33.5"/><path d="M0.5 4.3H32.3"/><path d="M2.5 7.0l2.3 -1"/><path d="M2.5 10.5l2.3 -1"/><path d="M2.5 14.0l2.3 -1"/><path d="M2.5 17.5l2.3 -1"/><path d="M2.5 21.0l2.3 -1"/><path d="M2.5 24.5l2.3 -1"/><path d="M2.5 28.0l2.3 -1"/><path d="M2.5 31.5l2.3 -1"/><path d="M7.0 2.2l1 2.1"/><path d="M10.5 2.2l1 2.1"/><path d="M14.0 2.2l1 2.1"/><path d="M17.5 2.2l1 2.1"/><path d="M21.0 2.2l1 2.1"/><path d="M24.5 2.2l1 2.1"/><path d="M28.0 2.2l1 2.1"/><path d="M21.5 17.5V8.5Q22 6.8 24 7L27 8Q29.5 9 29.5 11.5V15.5Q28 17.5 26 17.6Z"/><path d="M13.3 17.6H26.2V27"/><path d="M13.3 17.6V27"/><path d="M12 27.5H27.6Q27.6 35 19.8 35.2Q12 35 12 27.5Z"/><path d="M12.5 30H27"/></g><path d="M9 6.7H18.6V17.6H7.1V8.6Z" fill="#fbab1c"/><circle cx="17" cy="22.5" r="1" fill="#fbab1c"/></svg>
<svg style="left:652.5px;top:777.8px" width="60" height="60" viewBox="-4 -30 60 60"><g transform="rotate(29.5)"><rect x="0" y="-2" width="4.5" height="4" rx="1" fill="#858585" stroke="#3f3f3f" stroke-width="0.5"/><path d="M4 -2.3L16 -4.1L16 4.1L4 2.3Z" fill="#969696" stroke="#3f3f3f" stroke-width="0.8"/><rect x="15.5" y="-5.6" width="5.5" height="11.2" rx="1.5" fill="#7f7f7f" stroke="#3f3f3f" stroke-width="0.6"/><path d="M21 -3.8L38 -3.3L38 3.3L21 3.8Z" fill="#8c8c8c" stroke="#3f3f3f" stroke-width="0.8"/><rect x="38" y="-4" width="5" height="8" rx="1.2" fill="#7a7a7a" stroke="#3f3f3f" stroke-width="0.6"/><circle cx="43" cy="-2.6" r="1.3" fill="#f0a020"/><circle cx="43.5" cy="1.8" r="1.3" fill="#f0a020"/></g></svg>
<div class="t" style="left:715.2px;top:813.89px;font-size:11px;color:#1e1e1e;font-weight:400;transform:scaleX(0.8760);">CLGR-M0309-MILLFACE</div>
<div class="t" style="left:880px;top:813.89px;font-size:11px;color:#1e1e1e;font-weight:400;transform:scaleX(0.9370);">Planfräser-WSP D66</div>
<div class="t" style="left:1018.3px;top:813.89px;font-size:11px;color:#1e1e1e;font-weight:400;transform:scaleX(0.9030);">SK50-NCT63-ZYLS27 / Walter</div>
<div class="t" style="left:1231px;top:813.89px;font-size:11px;color:#1e1e1e;font-weight:400;transform:scaleX(0.8475);">PRESETTING-COSTUNIT/PRESETTING-WORKPL</div>
<div class="t" style="left:1452.6px;top:813.89px;font-size:11px;color:#1e1e1e;font-weight:400;transform:scaleX(0.9300);">3466</div>
<div class="a" style="left:604px;top:844px;width:1002px;height:1px;background:#d6d6d6;"></div>
<div class="a" style="left:604px;top:961px;width:780px;height:7px;background:#b9b9b9;"></div>
<div class="a" style="left:304px;top:994px;width:1340px;height:37px;background:#fff;"></div>
<div class="a" style="left:1293px;top:1000px;width:88px;height:25px;background:#d6d6d6;"></div>
<div class="t" style="left:1311px;top:1006.70px;font-size:13px;color:#222;font-weight:400;transform:scaleX(0.9001);">Speichern</div>
<div class="a" style="left:1393px;top:1000px;width:139px;height:25px;background:#d6d6d6;"></div>
<div class="t" style="left:1402.3px;top:1006.70px;font-size:13px;color:#222;font-weight:400;transform:scaleX(0.9119);">Speichern &amp; Schließen</div>
<div class="a" style="left:1544px;top:1000px;width:88px;height:25px;background:#d6d6d6;"></div>
<div class="t" style="left:1559px;top:1006.70px;font-size:13px;color:#222;font-weight:400;transform:scaleX(0.9222);">Abbrechen</div>
<div class="a" style="left:1676px;top:1039px;width:2px;height:2px;background:#e8eef4;"></div>
<div class="a" style="left:1673px;top:1042px;width:2px;height:2px;background:#e8eef4;"></div>
<div class="a" style="left:1676px;top:1042px;width:2px;height:2px;background:#e8eef4;"></div>
<div class="a" style="left:1670px;top:1045px;width:2px;height:2px;background:#e8eef4;"></div>
<div class="a" style="left:1673px;top:1045px;width:2px;height:2px;background:#e8eef4;"></div>
<div class="a" style="left:1676px;top:1045px;width:2px;height:2px;background:#e8eef4;"></div>
</body></html>
